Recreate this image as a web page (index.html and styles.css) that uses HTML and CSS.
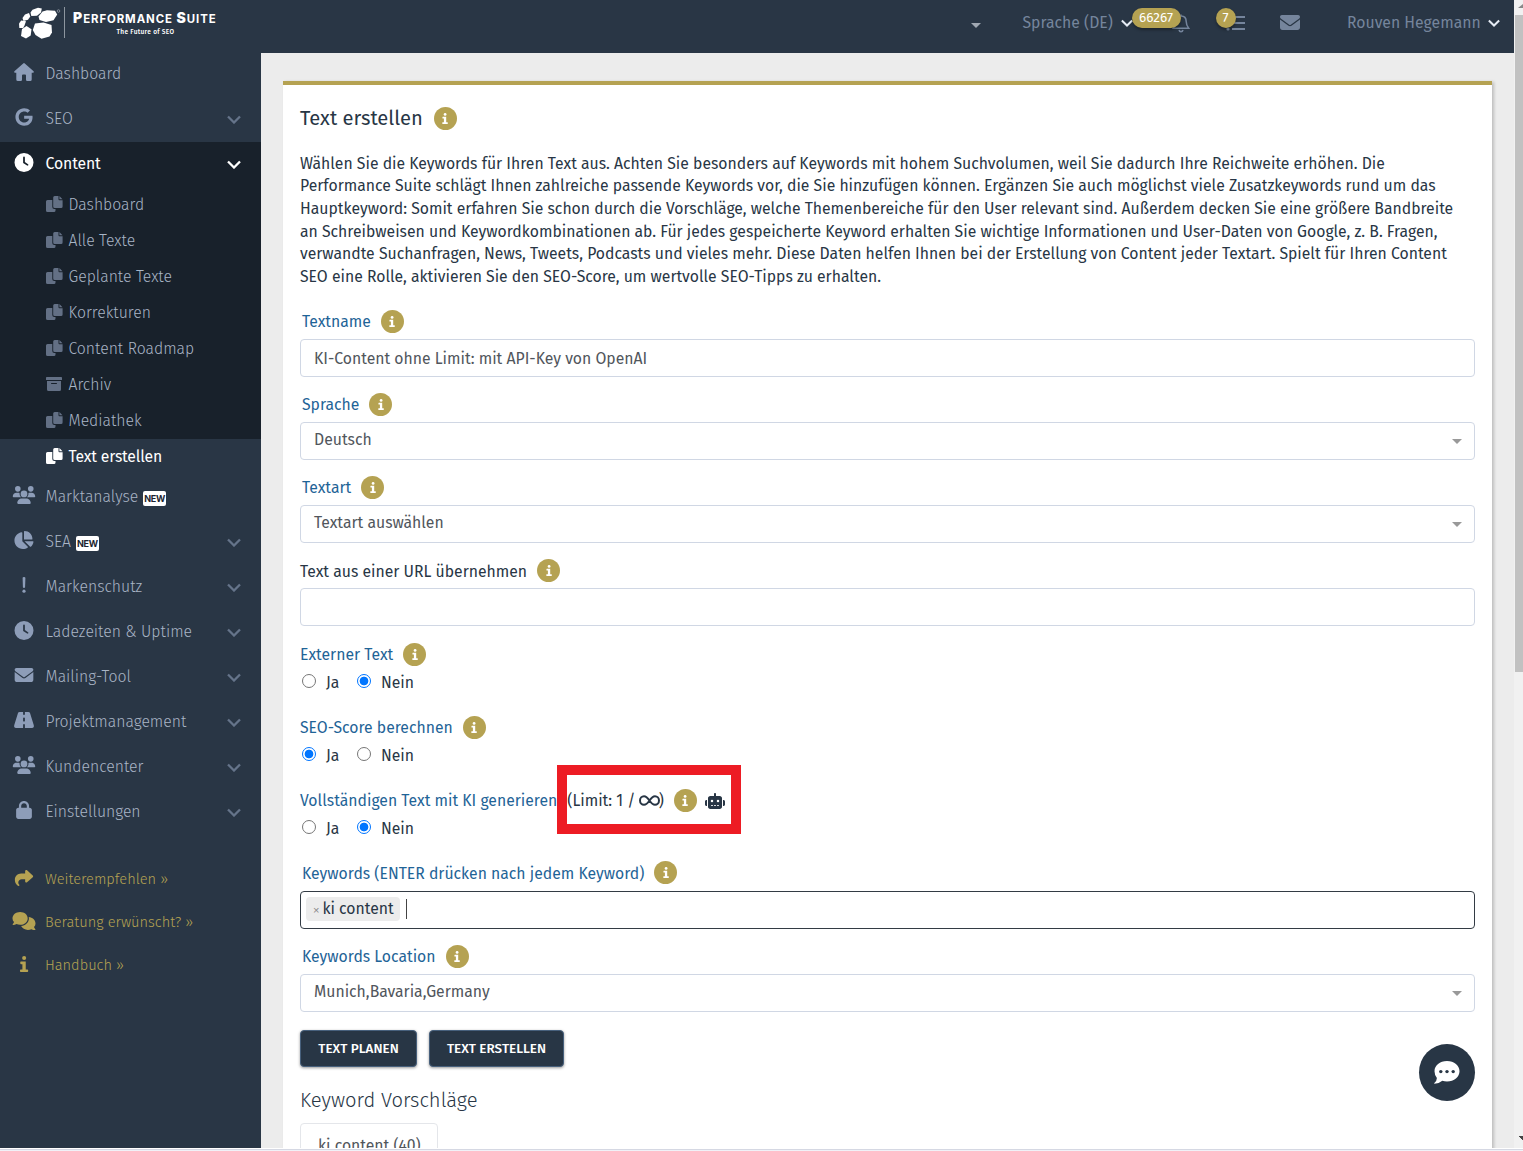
FILE: index.html
```html
<!DOCTYPE html>
<html lang="de">
<head>
<meta charset="utf-8">
<title>Performance Suite – Text erstellen</title>
<link rel="stylesheet" href="styles.css">
</head>
<body>
<svg class="sprite" aria-hidden="true">
  <symbol id="home" viewBox="0 0 20 18"><path d="M9.2.4Q10-.3 10.800.4L19.600 8.200Q20.300 9.600 19 9.800H17.700V16.500Q17.700 18 16.200 18H13.200Q12 18 12 16.800V12.600Q12 11.600 11 11.600H9Q8 11.600 8 12.600V16.800Q8 18 6.800 18H3.800Q2.300 18 2.300 16.500V9.800H1Q-.3 9.600.4 8.200Z"/></symbol>
  <symbol id="google" viewBox="0 0 488 512"><path d="M488 261.800C488 403.300 391.100 504 248 504 110.800 504 0 393.200 0 256S110.800 8 248 8c66.800 0 123 24.500 166.300 64.900l-67.500 64.900C258.500 52.600 94.300 116.600 94.300 256c0 86.500 69.100 156.600 153.700 156.600 98.200 0 135-70.400 140.800-106.900H248v-85.300h236.100c2.300 12.700 3.900 24.900 3.900 41.400z"/></symbol>
  <symbol id="clock" viewBox="0 0 512 512"><path fill-rule="evenodd" d="M256 0a256 256 0 1 1 0 512A256 256 0 1 1 256 0zM232 120V256c0 8 4 15.500 10.700 20l96 64c11 7.400 25.900 4.400 33.300-6.700s4.400-25.900-6.700-33.300L280 243.200V120c0-13.300-10.700-24-24-24s-24 10.700-24 24z"/></symbol>
  <symbol id="copy" viewBox="0 0 17 16"><path d="M1.500 4H6.300V11Q6.300 13 8.300 13H9.500V14.500Q9.500 16 8 16H1.500Q0 16 0 14.500V5.500Q0 4 1.500 4ZM8.700 0H12.500V3.300Q12.500 4.200 13.400 4.200H16.600V10.500Q16.600 12 15.100 12H8.700Q7.200 12 7.200 10.500V1.500Q7.200 0 8.700 0ZM13.400.1 16.500 3.300H13.400Z"/></symbol>
  <symbol id="archive" viewBox="0 0 16 14"><path fill-rule="evenodd" d="M.8 0H15.200Q16 0 16 .8V3H0V.8Q0 0 .8 0ZM1 4H15V12.500Q15 14 13.500 14H2.500Q1 14 1 12.500ZM5.500 6Q5 6 5 6.500T5.500 7H10.500Q11 7 11 6.500T10.500 6Z"/></symbol>
  <symbol id="users" viewBox="0 0 640 512"><circle cx="144" cy="80" r="80"/><circle cx="512" cy="80" r="80"/><circle cx="320" cy="224" r="96"/><path d="M0 298.700C0 239.800 47.800 192 106.700 192h42.700c15.900 0 31 3.500 44.600 9.700-5 42 10 86 42 118.300H21.300C9.600 320 0 310.400 0 298.700zM405 320c32-32 47-75 41-118 14-7 29-10 45-10h42.700C592.200 192 640 239.800 640 298.700c0 11.800-9.600 21.300-21.300 21.300zM128 485.300C128 411.700 187.700 352 261.300 352h117.300C452.300 352 512 411.700 512 485.300c0 14.700-11.900 26.700-26.700 26.700H154.700c-14.700 0-26.700-11.900-26.700-26.700z"/></symbol>
  <symbol id="pie" viewBox="32 0 544 512"><path d="M304 240V16.600c0-9 7-16.600 16-16.600C443.700 0 544 100.300 544 224c0 9-7.600 16-16.600 16H304zM32 272C32 150.700 122.100 50.300 239 34.300c9.200-1.300 17 6.100 17 15.400V288L412.500 444.500c6.700 6.700 6.200 17.700-1.500 23.100C371.800 495.600 323.800 512 272 512C139.500 512 32 404.600 32 272zm526.400 16c9.300 0 16.600 7.800 15.400 17c-7.700 55.900-34.600 105.600-73.900 142.300c-6 5.600-15.400 5.200-21.200-.7L320 288H558.400z"/></symbol>
  <symbol id="excl" viewBox="0 0 4 16"><path d="M.6 1Q.6 0 2 0T3.400 1L3.100 10Q3 11 2 11T.9 10Z"/><circle cx="2" cy="14.200" r="1.600"/></symbol>
  <symbol id="mail" viewBox="0 64 512 384"><path d="M48 64C21.500 64 0 85.500 0 112c0 15.100 7.100 29.300 19.200 38.400L236.800 313.600c11.400 8.500 27 8.500 38.400 0L492.800 150.400c12.100-9.100 19.200-23.300 19.200-38.400c0-26.500-21.500-48-48-48H48zM0 176V384c0 35.300 28.700 64 64 64H448c35.300 0 64-28.700 64-64V176L294.400 339.200c-22.800 17.100-54 17.100-76.800 0L0 176z"/></symbol>
  <symbol id="road" viewBox="0 0 20 16"><path d="M5.600 0H9.100V2.200Q9.100 3 10 3T10.900 2.200V0H14.400Q15.600 0 16 1L19.800 13.300Q20.300 16 18 16H10.900V13Q10.900 12 10 12T9.100 13V16H2Q-.3 16 .2 13.300L4 1Q4.400 0 5.600 0ZM9.100 6.300V8.700Q9.100 9.600 10 9.600T10.900 8.700V6.300Q10.900 5.400 10 5.400T9.100 6.300Z" fill-rule="evenodd"/></symbol>
  <symbol id="lock" viewBox="0 0 448 512"><path fill-rule="evenodd" d="M144 144v48H304V144c0-44.200-35.800-80-80-80s-80 35.800-80 80zM80 192V144C80 64.500 144.500 0 224 0s144 64.500 144 144v48h16c35.300 0 64 28.700 64 64V448c0 35.300-28.700 64-64 64H64c-35.300 0-64-28.700-64-64V256c0-35.300 28.700-64 64-64H80z"/></symbol>
  <symbol id="share" viewBox="0 32 512 448"><path d="M307 34.800c-11.500 5.100-19 16.600-19 29.200v64H176C78.800 128 0 206.800 0 304C0 417.300 81.500 467.900 100.200 478.100c2.500 1.400 5.300 1.900 8.100 1.900c10.900 0 19.700-8.900 19.700-19.700c0-7.500-4.300-14.400-9.800-19.500C108.800 431.900 96 414.400 96 384c0-53 43-96 96-96h96v64c0 12.600 7.400 24.100 19 29.200s25 3 34.400-5.400l160-144c6.700-6.100 10.600-14.700 10.600-23.800s-3.800-17.700-10.600-23.800l-160-144c-9.400-8.500-22.900-10.600-34.400-5.400z"/></symbol>
  <symbol id="chats" viewBox="0 0 23 18"><path d="M7.600 0C12 0 15.200 2.800 15.200 6.400S12 12.800 7.600 12.800Q5.600 12.800 4 12.100 2.300 13 .6 13-.3 12.800.3 12 1.300 10.900 1.500 9.900 0 8.400 0 6.400C0 2.800 3.300 0 7.600 0Z"/><path d="M16.200 5.100C20 5.400 23 8.200 23 11.500Q23 13.600 21.500 15.100 21.800 16.200 22.800 17.200 23.200 18 22.300 18.100 20.500 18.100 19 17.200 17.300 17.900 15.400 17.900C12.300 17.900 9.800 16.400 8.600 14.100 13 13.600 16.400 10.500 16.400 6.500Q16.400 5.800 16.200 5.100Z"/></symbol>
  <symbol id="info" viewBox="0 0 6 11"><path d="M.9 3.800H4.200V9.200H5.300Q5.900 9.200 5.900 10.100T5.300 11H.8Q.2 11 .2 10.100T.8 9.200H1.900V5.600H.9Q.4 5.600.4 4.700T.9 3.800Z"/><circle cx="3.100" cy="1.400" r="1.400"/></symbol>
  <symbol id="chev" viewBox="0 0 14 9"><path d="M1 1.500 7 7.500 13 1.500" fill="none" stroke="currentColor" stroke-width="2.300"/></symbol>
  <symbol id="robot" viewBox="0 0 640 512"><path fill-rule="evenodd" d="M320 0c17.700 0 32 14.300 32 32V96H472c39.800 0 72 32.200 72 72V440c0 39.800-32.200 72-72 72H168c-39.800 0-72-32.200-72-72V168c0-39.800 32.200-72 72-72H288V32c0-17.700 14.300-32 32-32zM208 384c-8.800 0-16 7.200-16 16s7.200 16 16 16h32c8.800 0 16-7.200 16-16s-7.200-16-16-16H208zm96 0c-8.800 0-16 7.200-16 16s7.200 16 16 16h32c8.800 0 16-7.200 16-16s-7.200-16-16-16H304zm96 0c-8.800 0-16 7.200-16 16s7.200 16 16 16h32c8.800 0 16-7.200 16-16s-7.200-16-16-16H400zM264 256a40 40 0 1 0 -80 0 40 40 0 1 0 80 0zm152 40a40 40 0 1 0 0-80 40 40 0 1 0 0 80zM48 224H64V416H48c-26.500 0-48-21.500-48-48V272c0-26.500 21.500-48 48-48zm544 0c26.500 0 48 21.500 48 48v96c0 26.500-21.500 48-48 48H576V224h16z"/></symbol>
</svg>

<div class="window">
  <header class="topbar">
    <div class="brand">
      <svg class="brand-mark" viewBox="0 0 46 34"><g fill="#fff"><path d="M14.500 2.800 20 .8 23.800 1.500 23 5.500 19 8.700 13.300 9 12.500 5.500Z"/><path d="M24.500 4.500 29 3.300 37 3.800 39.200 7.500 35.500 13.200 28 15 21.500 13 20.500 9.500Z"/><path d="M7 7.500 11 6 12.300 9.500 10 12.800 5.500 14 4.500 11Z"/><path d="M3.200 13.500 8 14.200 6.500 18.500 5.200 21 1.300 21 1 16.500Z"/><path d="M4 22 8.500 19 13.500 22.300 12.700 28.500 8 31.500 3 29Z"/><path d="M17 16.500 25.500 15.500 33.500 18 34 25.500 31.500 29.500 23.500 31.800 17.500 28 14.800 23Z"/></g><circle cx="40.500" cy="4" r="1.300" fill="none" stroke="#aeb6c0" stroke-width=".6"/></svg>
      <span class="brand-rule"></span>
      <div class="brand-text"><div class="brand-name"><b>P</b>ERFORMANCE <b>S</b>UITE</div><div class="brand-claim">The Future of SEO</div></div>
    </div>
    <nav class="tools">
      <i class="caret"></i>
      <span class="lang">Sprache (DE)</span><svg class="tchev"><use href="#chev"/></svg>
      <span class="bell"><svg viewBox="0 0 18 20"><path d="M9 1.500V3M9 3C5.500 3 3.800 5.500 3.800 8.500 3.800 12 2.800 13.300 1.300 15.200H16.700C15.200 13.300 14.200 12 14.200 8.500 14.200 5.500 12.500 3 9 3ZM7 17Q7.500 18.700 9 18.700T11 17" fill="none" stroke="currentColor" stroke-width="1.500"/></svg><em class="count">66267</em></span>
      <span class="tasks"><svg viewBox="0 0 20 16"><path d="M7 2H20M7 8H20M7 14H20" stroke="currentColor" stroke-width="2"/><circle cx="3" cy="14" r="1.600" fill="currentColor"/></svg><em class="count">7</em></span>
      <svg class="inbox"><use href="#mail"/></svg>
      <span class="user">Rouven Hegemann</span><svg class="tchev"><use href="#chev"/></svg>
    </nav>
  </header>

  <div class="middle">
    <aside class="sidebar">
      <a class="item"><svg class="ic"><use href="#home"/></svg>Dashboard</a>
      <a class="item"><svg class="ic"><use href="#google"/></svg>SEO<svg class="arrow"><use href="#chev"/></svg></a>
      <div class="open">
        <a class="item current"><svg class="ic round"><use href="#clock"/></svg>Content<svg class="arrow"><use href="#chev"/></svg></a>
        <a class="sub"><svg><use href="#copy"/></svg>Dashboard</a>
        <a class="sub"><svg><use href="#copy"/></svg>Alle Texte</a>
        <a class="sub"><svg><use href="#copy"/></svg>Geplante Texte</a>
        <a class="sub"><svg><use href="#copy"/></svg>Korrekturen</a>
        <a class="sub"><svg><use href="#copy"/></svg>Content Roadmap</a>
        <a class="sub"><svg class="box"><use href="#archive"/></svg>Archiv</a>
        <a class="sub"><svg><use href="#copy"/></svg>Mediathek</a>
        <a class="sub active"><svg><use href="#copy"/></svg>Text erstellen</a>
      </div>
      <a class="item"><svg class="ic"><use href="#users"/></svg>Marktanalyse<span class="new">NEW</span></a>
      <a class="item"><svg class="ic"><use href="#pie"/></svg>SEA<span class="new">NEW</span><svg class="arrow"><use href="#chev"/></svg></a>
      <a class="item"><svg class="ic small"><use href="#excl"/></svg>Markenschutz<svg class="arrow"><use href="#chev"/></svg></a>
      <a class="item"><svg class="ic round"><use href="#clock"/></svg>Ladezeiten &amp; Uptime<svg class="arrow"><use href="#chev"/></svg></a>
      <a class="item"><svg class="ic letter"><use href="#mail"/></svg>Mailing-Tool<svg class="arrow"><use href="#chev"/></svg></a>
      <a class="item"><svg class="ic small"><use href="#road"/></svg>Projektmanagement<svg class="arrow"><use href="#chev"/></svg></a>
      <a class="item"><svg class="ic"><use href="#users"/></svg>Kundencenter<svg class="arrow"><use href="#chev"/></svg></a>
      <a class="item"><svg class="ic"><use href="#lock"/></svg>Einstellungen<svg class="arrow"><use href="#chev"/></svg></a>
      <div class="extra">
        <a class="link"><svg class="ic small"><use href="#share"/></svg>Weiterempfehlen »</a>
        <a class="link"><svg class="ic"><use href="#chats"/></svg>Beratung erwünscht? »</a>
        <a class="link"><svg class="ic hand"><use href="#info"/></svg>Handbuch »</a>
      </div>
    </aside>

    <main class="content">
      <section class="card">
        <h1 class="title">Text erstellen <span class="tip"><svg><use href="#info"/></svg></span></h1>
        <p class="intro">Wählen Sie die Keywords für Ihren Text aus. Achten Sie besonders auf Keywords mit hohem Suchvolumen, weil Sie dadurch Ihre Reichweite erhöhen. Die<br>Performance Suite schlägt Ihnen zahlreiche passende Keywords vor, die Sie hinzufügen können. Ergänzen Sie auch möglichst viele Zusatzkeywords rund um das<br>Hauptkeyword: Somit erfahren Sie schon durch die Vorschläge, welche Themenbereiche für den User relevant sind. Außerdem decken Sie eine größere Bandbreite<br>an Schreibweisen und Keywordkombinationen ab. Für jedes gespeicherte Keyword erhalten Sie wichtige Informationen und User-Daten von Google, z. B. Fragen,<br>verwandte Suchanfragen, News, Tweets, Podcasts und vieles mehr. Diese Daten helfen Ihnen bei der Erstellung von Content jeder Textart. Spielt für Ihren Content<br>SEO eine Rolle, aktivieren Sie den SEO-Score, um wertvolle SEO-Tipps zu erhalten.</p>

        <div class="field"><div class="label inset">Textname<span class="tip"><svg><use href="#info"/></svg></span></div><div class="input">KI-Content ohne Limit: mit API-Key von OpenAI</div></div>
        <div class="field"><div class="label inset">Sprache<span class="tip"><svg><use href="#info"/></svg></span></div><div class="input select">Deutsch<i class="caret"></i></div></div>
        <div class="field"><div class="label inset">Textart<span class="tip"><svg><use href="#info"/></svg></span></div><div class="input select">Textart auswählen<i class="caret"></i></div></div>
        <div class="field"><div class="label dark">Text aus einer URL übernehmen<span class="tip"><svg><use href="#info"/></svg></span></div><div class="input"></div></div>

        <div class="choices">
          <div class="choice"><div class="label">Externer Text<span class="tip"><svg><use href="#info"/></svg></span></div><div class="radios"><i class="radio"></i><span class="ja">Ja</span><i class="radio on"></i><span>Nein</span></div></div>
          <div class="choice"><div class="label">SEO-Score berechnen<span class="tip"><svg><use href="#info"/></svg></span></div><div class="radios"><i class="radio on"></i><span class="ja">Ja</span><i class="radio"></i><span>Nein</span></div></div>
          <div class="choice"><div class="label ai">Vollständigen Text mit KI generieren<span class="limit">(Limit: 1 / <svg class="inf" viewBox="0 0 21 11"><path d="M10.500 5.500C8.500 2.500 7 1.200 5 1.200A4 4.300 0 0 0 5 9.800C7 9.800 8.500 8.500 10.500 5.500 12.500 2.500 14 1.200 16 1.200A4 4.300 0 0 1 16 9.800C14 9.800 12.500 8.500 10.500 5.500Z" fill="none" stroke="currentColor" stroke-width="2"/></svg>)</span><span class="tip"><svg><use href="#info"/></svg></span><svg class="robot"><use href="#robot"/></svg><span class="marker"></span></div><div class="radios"><i class="radio"></i><span class="ja">Ja</span><i class="radio on"></i><span>Nein</span></div></div>
        </div>

        <div class="field"><div class="label inset">Keywords (ENTER drücken nach jedem Keyword)<span class="tip"><svg><use href="#info"/></svg></span></div><div class="input focus"><span class="chip"><b>×</b>ki content</span><i class="cursor"></i></div></div>
        <div class="field"><div class="label inset">Keywords Location<span class="tip"><svg><use href="#info"/></svg></span></div><div class="input select">Munich,Bavaria,Germany<i class="caret"></i></div></div>

        <div class="buttons"><button class="btn plan">TEXT PLANEN</button><button class="btn make">TEXT ERSTELLEN</button></div>
        <h2 class="subtitle">Keyword Vorschläge</h2>
        <div class="suggestion">ki content (40)</div>
      </section>
    </main>
  </div>
</div>
<div class="scrollbar"><i class="up"></i><i class="thumb"></i><i class="down"></i></div>
<div class="chat"><svg viewBox="0 0 26 23"><path fill="#fff" d="M13 0C20.200 0 25.500 4.500 25.500 10.200S20.200 20.400 13 20.400Q10.500 20.400 8.300 19.700 5 22.500.6 22.800-.1 22.500.6 21.800 2.800 19.600 2.900 16.900.5 14 .5 10.200C.5 4.500 5.800 0 13 0Z"/><g fill="#283645"><circle cx="6.800" cy="10.600" r="1.700"/><circle cx="13" cy="10.600" r="1.700"/><circle cx="19.200" cy="10.600" r="1.700"/></g></svg></div>
</body>
</html>
```
FILE: styles.css
```css
* { box-sizing: border-box; }
body {
  margin: 0; height: 1151px; overflow: hidden; display: grid;
  grid-template-columns: 1514px 9px; grid-template-rows: 1148px 3px;
  background: linear-gradient(#fff 1149px, #d5d8e3 1149px, #d5d8e3 1150px, #f0f1f7 1150px);
  font: 400 15.750px/22.600px "Fira Sans", "Noto Sans", sans-serif;
  color: #283645; position: relative;
}
svg { fill: currentColor; display: block; flex: none; }
.sprite { position: absolute; width: 0; height: 0; }
i, em { font-style: normal; }
.window { height: 1148px; overflow: hidden; display: flex; flex-direction: column; }

/* Top bar */
.topbar { height: 53px; flex: none; background: #293645; display: flex; justify-content: space-between; }
.brand { display: flex; padding: 7px 0 0 18px; }
.brand-mark { width: 46px; height: 34px; }
.brand-rule { width: 1px; height: 31px; background: #8d969f; margin-right: 8px; }
.brand-text { width: 145px; color: #fff; }
.brand-name { font: 700 11.400px/21px Inter, sans-serif; height: 20px; letter-spacing: .93px; white-space: nowrap; }
.brand-name b { font-size: 14px; }
.brand-claim { font-weight: 500; font-size: 6.600px; line-height: 10px; letter-spacing: .3px; text-align: center; }
.tools { display: flex; align-items: center; height: 45px; color: #75859c; }
.tools .caret { border-top-color: #a0a8b2; margin: 6px 42px 0 0; }
.caret { width: 0; height: 0; border: 5px solid transparent; border-top: 5px solid #999; border-bottom: 0; }
.tchev { width: 12px; height: 8px; color: #e6ecf5; }
.lang { width: 98px; padding-top: 2px; }
.user { width: 141px; padding-top: 2px; }
.bell { position: relative; width: 18px; height: 20px; margin-left: 39px; }
.bell svg { width: 18px; height: 20px; }
.tasks { position: relative; width: 20px; height: 16px; margin: 0 35px 0 35px; }
.tasks svg { width: 20px; height: 16px; }
.count {
  position: absolute; height: 20px; border-radius: 10px; background: #b5a252; color: #fff;
  font-size: 13.500px; line-height: 20px; text-align: center; box-shadow: 0 2px 3px #0005;
}
.bell .count { width: 49px; left: -40px; top: -5px; }
.tasks .count { width: 20px; left: -9px; top: -7px; }
.inbox { width: 20px; height: 15px; margin-right: 47.500px; }
.tools > .tchev:last-child { margin-right: 14px; }

/* Sidebar */
.middle { display: flex; height: 1095px; }
.sidebar { width: 261px; flex: none; background: #293645; color: #a9b5c6; font-weight: 300; }
.item { display: flex; align-items: center; height: 45px; padding: 0 20px 0 12px; }
.sidebar > .item:first-child { height: 44px; padding-bottom: 1px; }
.ic { width: 24px; height: 18px; margin-right: 9.500px; color: #8d9db8; position: relative; top: -2.500px; }
.ic.round { height: 19px; }
.ic.small { height: 16px; }
.ic.letter { height: 14px; }
.ic.hand { height: 16px; }
.arrow { width: 14px; height: 9px; margin-left: auto; color: #65748a; }
.open { background: #18212b; height: 333px; padding-bottom: 1px; }
.open .item { color: #fff; font-weight: 400; letter-spacing: -.1px; }
.open .item svg { color: #fff; }
.sub { display: flex; align-items: center; height: 36px; padding: 2px 0 0 46px; }
.open .item + .sub { margin-top: -.5px; }
.sub svg { width: 17px; height: 16px; margin: 0 5.500px 4px 0; color: #637085; }
.sub .box { width: 16px; height: 14px; margin-right: 6.500px; }
.sub.active { background: #293645; color: #fff; font-weight: 400; letter-spacing: -.18px; }
.sub.active svg { color: #fff; }
.new {
  background: #fff; color: #1c2430; font: 700 9px/15px Inter, sans-serif; letter-spacing: -.25px;
  width: 23px; height: 15px; border-radius: 2px; text-align: center; margin: 2px 0 0 5px;
}
.extra { padding-top: 22px; font-size: 14.600px; color: #b5a252; }
.link { display: flex; align-items: center; height: 43px; padding: 1px 0 0 12px; }
.link .ic { color: #b5a252; margin-right: 9px; top: -1.500px; }

/* Content card */
.content { flex: 1; background: #ececec; padding: 28px 22px 0; min-width: 0; }
.card { height: 1200px; width: 1209px; background: #fff; border-top: 4px solid #b5a252; box-shadow: 2px 1px 3px #0003; padding: 20px 17px 0; }
.title { margin: 0; font-size: 20.160px; font-weight: 400; line-height: 26px; display: flex; align-items: center; }
.tip { width: 23px; height: 23px; border-radius: 50%; background: #b5a252; color: #fff; display: flex; align-items: center; justify-content: center; margin-left: 10px; flex: none; }
.tip svg { width: 6px; height: 11px; }
.title .tip { margin-left: 11px; }
.intro { margin: 21px 0 6px; height: 136px; padding-top: .9px; white-space: nowrap; }
.field { height: 83.100px; padding-top: 15px; }
.label { display: flex; align-items: center; height: 24px; padding-top: 2px; color: #1f6497; white-space: nowrap; }
.label .tip { margin-top: -2px; }
.label.inset { padding-left: 2px; }
.label.dark { color: #283645; position: relative; top: .6px; }
.field .label { margin-bottom: 6px; }
.input { height: 38px; border: 1px solid #d0d7e4; border-radius: 4px; padding: 2px 13px 0; color: #51565c; line-height: 34px; background: #fff; display: flex; align-items: center; }
.select { justify-content: space-between; padding: 0 12px 2px 13px; }
.select .caret { margin-top: 2px; }
.choices { padding-top: 1.200px; margin-bottom: -.6px; }
.choice { height: 73px; padding-top: 15px; }
.radios { display: flex; align-items: center; height: 30px; padding: 2px 0 0 2px; }
.radio { width: 14px; height: 14px; border: 1px solid #767676; border-radius: 50%; background: #fff; margin-top: -3px; }
.radio.on { border-color: #0075ff; background: radial-gradient(circle, #0075ff 4px, #fff 4.700px); }
.radios span { margin: 2px 0 0 10px; }
.radios .ja { width: 31px; }
.ai { position: relative; }
.limit { display: flex; align-items: center; color: #283645; margin-left: 10px; white-space: pre; }
.inf { width: 21px; height: 11px; margin: -2px -1px 0; }
.robot { width: 20px; height: 16px; color: #283645; margin: -2px 0 0 8px; }
.marker { position: absolute; left: 257px; top: -24px; width: 184px; height: 69px; border: 10px solid #ed1c24; }
.focus { border-color: #333b44; padding: 0 6px 2px 5px; }
.chip { background: #ececec; border-radius: 4px; height: 24px; line-height: 23px; width: 94px; padding-left: 7px; color: #283645; white-space: nowrap; }
.chip b { font: 400 11px/20px "Liberation Sans", sans-serif; color: #888; margin-right: 3px; }
.cursor { width: 1px; height: 20px; background: #444; margin-left: 6px; }
.buttons { display: flex; gap: 12px; padding-top: 17.800px; }
.btn { height: 37px; padding: 0; border: 1px solid #47607c; border-radius: 4px; background: #283645; color: #fff; font: 500 13.500px/35px "Fira Sans", "Noto Sans", sans-serif; box-shadow: 0 1px 3px #0006; }
.plan { width: 117px; }
.make { width: 135px; }
.subtitle { margin: 20px 0 10px; font-size: 20.160px; line-height: 26px; font-weight: 300; }
.suggestion { width: 138px; height: 44px; border: 1px solid #e4e6ea; border-radius: 4px; padding-left: 17px; line-height: 43px; color: #51565c; }

/* Window scrollbar and floating chat button */
.scrollbar { background: #f1f1f1; display: flex; flex-direction: column; align-items: flex-end; height: 1148px; overflow: hidden; }
.up { width: 0; height: 0; border-left: 5px solid transparent; border-bottom: 4px solid #888; margin-top: 4px; }
.thumb { width: 8px; height: 657px; background: #c1c1c1; margin-top: 7px; }
.down { width: 4px; height: 4px; margin-top: 464px; background: linear-gradient(45deg, transparent 50%, #444 50%); }
.chat { position: absolute; left: 1419px; top: 1044px; width: 56px; height: 57px; border-radius: 50%; background: #283645; display: flex; align-items: center; justify-content: center; }
.chat svg { width: 26px; height: 23px; }
```
